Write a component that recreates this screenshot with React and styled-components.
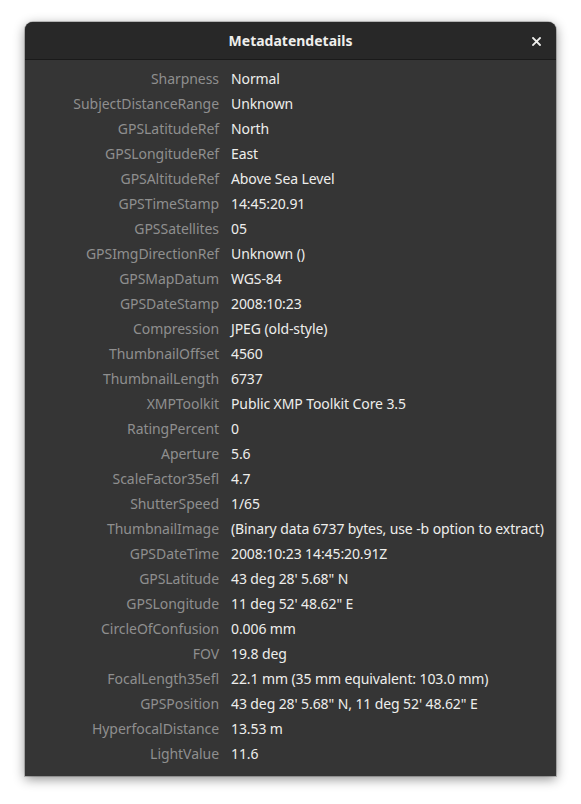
import { Fragment } from "react";
import styled, { createGlobalStyle } from "styled-components";

const GlobalStyle = createGlobalStyle`
  html, body {
    margin: 0;
    padding: 0;
    background: #ffffff;
  }
  body {
    font-family: "Noto Sans", "Open Sans", sans-serif;
  }
`;

const Page = styled.div`
  width: 581px;
  height: 804px;
  padding: 22px 25px 0 25px;
  box-sizing: border-box;
`;

const Window = styled.div`
  width: 531px;
  background-color: #353535;
  border-radius: 8px 8px 0 0;
  box-shadow: 0 3px 12px rgba(0, 0, 0, 0.45), 0 0 0 1px rgba(0, 0, 0, 0.2);
  overflow: hidden;
`;

const HeaderBar = styled.div`
  height: 37px;
  background-color: #282828;
  border-bottom: 1px solid #1a1a1a;
  display: flex;
  align-items: center;
  justify-content: center;
  position: relative;
`;

const Title = styled.span`
  color: #eeeeec;
  font-weight: 700;
  font-size: 14px;
`;

const CloseButton = styled.button`
  position: absolute;
  right: 10px;
  top: 9px;
  width: 20px;
  height: 20px;
  border: none;
  background: transparent;
  padding: 0;
  display: flex;
  align-items: center;
  justify-content: center;
`;

const Body = styled.div`
  display: grid;
  grid-template-columns: 194px 1fr;
  column-gap: 12px;
  padding: 6px 0 10px 0;
`;

const Label = styled.div`
  text-align: right;
  color: #8f8f8f;
  font-size: 14px;
  line-height: 25px;
  white-space: nowrap;
  letter-spacing: -0.05px;
`;

const Value = styled.div`
  color: #eeeeec;
  font-size: 14px;
  line-height: 25px;
  white-space: nowrap;
  letter-spacing: -0.1px;
`;

const rows = [
  ["Sharpness", "Normal"],
  ["SubjectDistanceRange", "Unknown"],
  ["GPSLatitudeRef", "North"],
  ["GPSLongitudeRef", "East"],
  ["GPSAltitudeRef", "Above Sea Level"],
  ["GPSTimeStamp", "14:45:20.91"],
  ["GPSSatellites", "05"],
  ["GPSImgDirectionRef", "Unknown ()"],
  ["GPSMapDatum", "WGS-84"],
  ["GPSDateStamp", "2008:10:23"],
  ["Compression", "JPEG (old-style)"],
  ["ThumbnailOffset", "4560"],
  ["ThumbnailLength", "6737"],
  ["XMPToolkit", "Public XMP Toolkit Core 3.5"],
  ["RatingPercent", "0"],
  ["Aperture", "5.6"],
  ["ScaleFactor35efl", "4.7"],
  ["ShutterSpeed", "1/65"],
  ["ThumbnailImage", "(Binary data 6737 bytes, use -b option to extract)"],
  ["GPSDateTime", "2008:10:23 14:45:20.91Z"],
  ["GPSLatitude", "43 deg 28' 5.68\" N"],
  ["GPSLongitude", "11 deg 52' 48.62\" E"],
  ["CircleOfConfusion", "0.006 mm"],
  ["FOV", "19.8 deg"],
  ["FocalLength35efl", "22.1 mm (35 mm equivalent: 103.0 mm)"],
  ["GPSPosition", "43 deg 28' 5.68\" N, 11 deg 52' 48.62\" E"],
  ["HyperfocalDistance", "13.53 m"],
  ["LightValue", "11.6"],
];

const App = () => {
  return (
    <Page>
      <GlobalStyle />
      <Window>
        <HeaderBar>
          <Title>Metadatendetails</Title>
          <CloseButton aria-label="close">
            <svg width="9" height="9" viewBox="0 0 9 9">
              <path d="M1 1 L8 8 M8 1 L1 8" stroke="#eeeeec" strokeWidth="1.8" strokeLinecap="square" />
            </svg>
          </CloseButton>
        </HeaderBar>
        <Body>
          {rows.map(([label, value]) => (
            <Fragment key={label}>
              <Label>{label}</Label>
              <Value>{value}</Value>
            </Fragment>
          ))}
        </Body>
      </Window>
    </Page>
  );
};

export default App;
